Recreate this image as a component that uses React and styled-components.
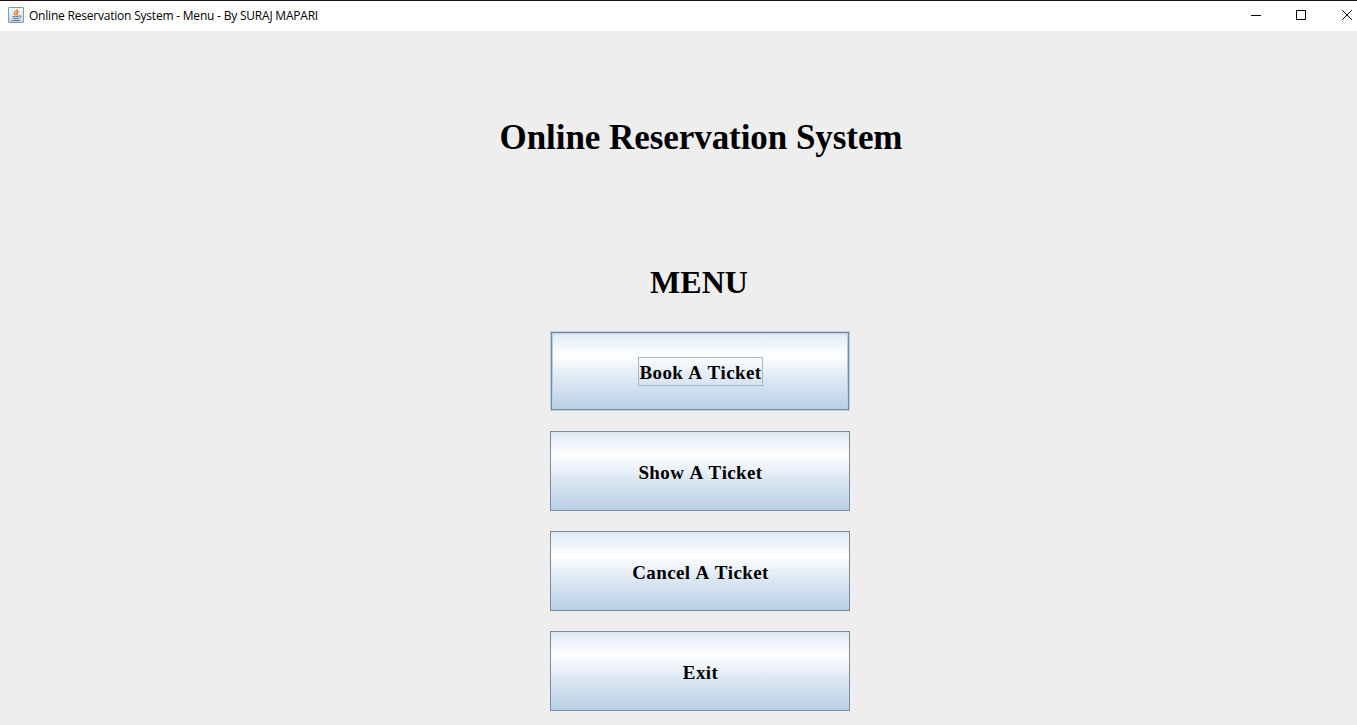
import React from "react";
import styled, { createGlobalStyle, css } from "styled-components";

const GlobalStyle = createGlobalStyle`
  *, *::before, *::after { box-sizing: border-box; }
  body { margin: 0; background: #eeeeee; overflow: hidden; }
`;

const Window = styled.div`
  display: flex;
  flex-direction: column;
  width: 1357px;
  height: 725px;
  overflow: hidden;
  background: #eeeeee;
`;

const TitleBar = styled.header`
  display: flex;
  align-items: center;
  flex: none;
  height: 31px;
  padding: 0 0 2px 8px;
  border-top: 1px solid #17151a;
  background: #ffffff;
`;

const Caption = styled.span`
  flex: 1;
  margin: 2px 0 0 5px;
  font: 12px/16px "Open Sans", "Noto Sans", sans-serif;
  letter-spacing: -0.21px;
  color: #000000;
  white-space: nowrap;
`;

const Controls = styled.div`
  display: flex;
  gap: 35px;
  align-items: center;
`;

const Glyph = styled.svg`
  display: block;
  flex: none;
`;

const Content = styled.main`
  display: flex;
  flex-direction: column;
  align-items: center;
  width: 400px;
  margin-left: 500px;
`;

const Heading = styled.h1`
  margin: 87px 0 0 2px;
  font: bold 35px/40px "Liberation Serif", "Times New Roman", serif;
  letter-spacing: -0.06px;
  color: #000000;
  white-space: nowrap;
`;

const MenuHeading = styled.h2`
  margin: 104px 2px 0 0;
  font: bold 32px/40px "Liberation Serif", "Times New Roman", serif;
  color: #000000;
`;

const Menu = styled.nav`
  display: flex;
  flex-direction: column;
  gap: 20px;
  margin-top: 29px;
`;

const MenuButton = styled.button`
  display: flex;
  align-items: center;
  justify-content: center;
  width: 300px;
  height: 80px;
  padding: 1px 0 0 1px;
  border: 1px solid #7a8a99;
  border-radius: 0;
  background: linear-gradient(#dde8f3 0%, #ffffff 30%, #dde8f3 60%, #b8cfe5 100%);
  ${(p) =>
    p.$focused &&
    css`
      border-color: #b8cfe5;
      box-shadow: inset 0 0 0 1px #7a8a99, inset 0 0 0 2px #b8cfe5;
    `}
`;

const ButtonLabel = styled.span`
  display: block;
  min-width: 125px;
  height: 29px;
  border: 1px solid ${(p) => (p.$focused ? "#a3b8cc" : "transparent")};
  font: bold 19px/29px "Liberation Serif", "Times New Roman", serif;
  font-kerning: none;
  letter-spacing: 0.37px;
  text-align: center;
  color: #000000;
  white-space: nowrap;
`;

const JavaIcon = () => (
  <Glyph width="16" height="16" viewBox="0 0 16 16">
    <defs>
      <linearGradient id="tile" x1="0" y1="0" x2="0" y2="1">
        <stop offset="0" stopColor="#fafcfd" />
        <stop offset="1" stopColor="#c3d6e3" />
      </linearGradient>
    </defs>
    <rect x="0.5" y="0.5" width="15" height="15" rx="0.5" fill="url(#tile)" stroke="#7f9bb0" />
    <path d="M9.3 2c.4 2-3.9 2.7-3 4.8.3.6.9.9 1.3 1.4M11 4.4C9.3 5 8 5.9 9.1 7c.5.5.2 1-.4 1.4" fill="none" stroke="#e87316" strokeWidth="1.4" />
    <path d="M4.6 9.5c1.8.4 4.4.4 6.2 0M5.2 11.5c1.5.3 3.7.3 5 0M3.6 13.4c2.2.4 6.1.4 8.5-.2M11.2 8.9c2.6-.6 2.3 1.6.2 2.1" fill="none" stroke="#4c7896" strokeWidth="1" />
  </Glyph>
);

const WindowControls = () => (
  <Controls>
    <Glyph width="10" height="10" viewBox="0 0 10 10">
      <path d="M0 5.5H10" stroke="#000" />
    </Glyph>
    <Glyph width="10" height="10" viewBox="0 0 10 10">
      <path d="M.5.5h9v9h-9z" fill="none" stroke="#000" />
    </Glyph>
    <Glyph width="16" height="10" viewBox="0 0 16 10">
      <path d="M1.2.2l9.6 9.6M10.8.2L1.2 9.8" fill="none" stroke="#000" />
    </Glyph>
  </Controls>
);

const ITEMS = ["Book A Ticket", "Show A Ticket", "Cancel A Ticket", "Exit"];

export default function App() {
  return (
    <>
      <GlobalStyle />
      <Window>
        <TitleBar>
          <JavaIcon />
          <Caption>Online Reservation System - Menu - By SURAJ MAPARI</Caption>
          <WindowControls />
        </TitleBar>
        <Content>
          <Heading>Online Reservation System</Heading>
          <MenuHeading>MENU</MenuHeading>
          <Menu>
            {ITEMS.map((label, i) => (
              <MenuButton key={label} type="button" $focused={i === 0}>
                <ButtonLabel $focused={i === 0}>{label}</ButtonLabel>
              </MenuButton>
            ))}
          </Menu>
        </Content>
      </Window>
    </>
  );
}
